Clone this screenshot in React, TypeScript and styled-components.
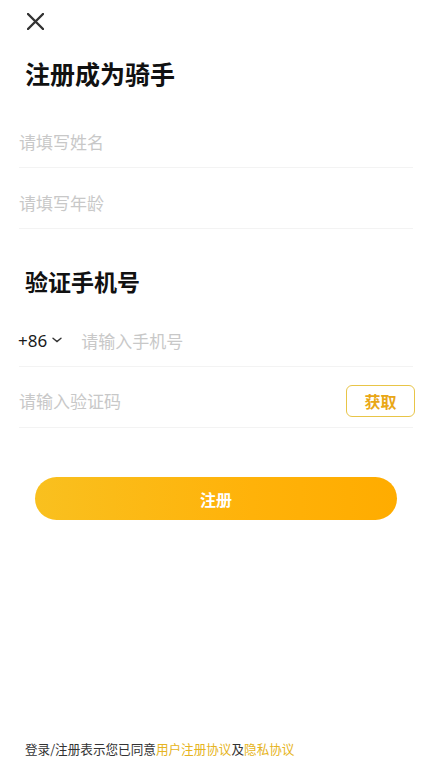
import React from "react";
import styled, { createGlobalStyle } from "styled-components";

const Global = createGlobalStyle`
  * { box-sizing: border-box; }
  html, body { margin: 0; padding: 0; background: #fff; }
  body { font-family: "Noto Sans CJK SC", "Noto Sans", sans-serif; }
  input { font-family: inherit; }
`;

const Page = styled.div`
  min-height: 768px;
  display: flex;
  flex-direction: column;
  padding: 0 19px;
`;

const CloseButton = styled.button`
  margin: 13px 0 0 8px;
  width: 17px;
  height: 17px;
  padding: 0;
  border: none;
  background: none;
  display: flex;
  cursor: pointer;
`;

const Title = styled.h1<{ $size: number; $top: number }>`
  margin: ${(p) => p.$top}px 0 0 6px;
  font-size: ${(p) => p.$size}px;
  line-height: 34px;
  font-weight: 700;
  color: #111;
`;

const Row = styled.div<{ $top?: number; $pad?: number }>`
  margin-top: ${(p) => p.$top ?? 0}px;
  height: 61px;
  padding-top: ${(p) => p.$pad ?? 8}px;
  border-bottom: 1px solid #f3f3f3;
  display: flex;
  align-items: center;
`;

const Field = styled.input`
  flex: 1;
  min-width: 0;
  height: 40px;
  border: none;
  outline: none;
  padding: 0;
  font-size: 17px;
  color: #222;
  background: transparent;
  &::placeholder { color: #c8c8c8; }
`;

const Prefix = styled.div`
  display: flex;
  align-items: center;
  gap: 5px;
  margin-left: -1px;
  margin-right: 19px;
  font-family: "Noto Sans", sans-serif;
  font-size: 17px;
  color: #1a1a1a;
`;

const CodeButton = styled.button`
  width: 69px;
  height: 32px;
  border: 1.5px solid #e8c548;
  border-radius: 6px;
  background: #fff;
  color: #e9a716;
  font-family: "Noto Sans CJK SC", sans-serif;
  font-size: 16px;
  font-weight: 700;
  padding: 0;
  margin-right: -2px;
`;

const Submit = styled.button`
  margin: 49px 16px 0 16px;
  height: 43px;
  border: none;
  border-radius: 22px;
  background: linear-gradient(90deg, #f9c01f 0%, #ffb209 60%, #ffac00 100%);
  color: #fff;
  font-family: "Noto Sans CJK SC", sans-serif;
  font-size: 16px;
  font-weight: 700;
`;

const Footer = styled.p`
  margin: auto 0 0 6px;
  padding-bottom: 10px;
  font-size: 12.6px;
  line-height: 18px;
  color: #333;
`;

const Link = styled.span`
  color: #e6b422;
`;

export default function App() {
  return (
    <>
      <Global />
      <Page>
        <CloseButton aria-label="关闭">
          <svg width="17" height="17" viewBox="0 0 17 17">
            <path d="M1 1L16 16M16 1L1 16" stroke="#333" strokeWidth="2.4" strokeLinecap="round" />
          </svg>
        </CloseButton>
        <Title $size={25} $top={26}>注册成为骑手</Title>
        <Row $top={17}>
          <Field placeholder="请填写姓名" />
        </Row>
        <Row>
          <Field placeholder="请填写年龄" />
        </Row>
        <Title $size={23} $top={35}>验证手机号</Title>
        <Row $top={8}>
          <Prefix>
            +86
            <svg width="10" height="6" viewBox="0 0 10 6">
              <path d="M1 1.2L5 4.6L9 1.2" stroke="#333" strokeWidth="1.4" fill="none" strokeLinecap="round" />
            </svg>
          </Prefix>
          <Field placeholder="请输入手机号" />
        </Row>
        <Row $pad={7}>
          <Field placeholder="请输入验证码" />
          <CodeButton>获取</CodeButton>
        </Row>
        <Submit>注册</Submit>
        <Footer>
          登录/注册表示您已同意<Link>用户注册协议</Link>及<Link>隐私协议</Link>
        </Footer>
      </Page>
    </>
  );
}
